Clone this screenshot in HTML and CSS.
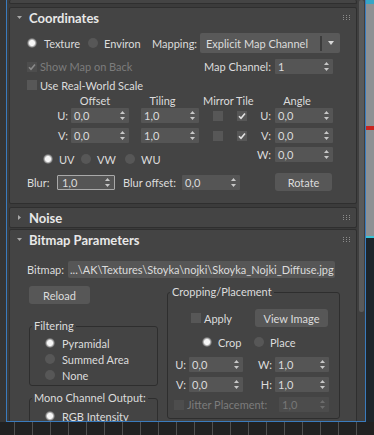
FILE: index.html
```html
<!DOCTYPE html>
<html lang="en">

<head>
    <meta charset="UTF-8">
    <meta name="viewport" content="width=device-width, initial-scale=1.0">
    <title>Bitmap Parameters</title>
    <link rel="stylesheet" href="styles.css">
</head>

<body>
    <div class="screen">
        <div class="workspace">
            <div class="side"></div>

            <div class="frame">
                <div class="rollouts">
                    <!-- bottom edge of the rollout above -->
                    <div class="rollout stub"></div>

                    <!-- Coordinates -->
                    <section class="rollout">
                        <div class="head">
                            <span class="tri down"></span>
                            <span class="title">Coordinates</span>
                            <svg class="grip" width="7" height="5" viewBox="0 0 7 5"><g fill="#8c8c8c"><rect x="0" y="0" width="1" height="1"/><rect x="3" y="0" width="1" height="1"/><rect x="6" y="0" width="1" height="1"/><rect x="0" y="2" width="1" height="1"/><rect x="3" y="2" width="1" height="1"/><rect x="6" y="2" width="1" height="1"/><rect x="0" y="4" width="1" height="1"/><rect x="3" y="4" width="1" height="1"/><rect x="6" y="4" width="1" height="1"/></g></svg>
                        </div>
                        <div class="body coords">
                            <div class="row row-map">
                                <label class="opt w-texture"><span class="radio on"></span>Texture</label>
                                <label class="opt w-environ"><span class="radio"></span>Environ</label>
                                <span class="w-mapping">Mapping:</span>
                                <div class="dropdown">
                                    <span class="dd-text">Explicit Map Channel</span>
                                    <span class="dd-btn"><svg width="6" height="4" viewBox="0 0 6 4"><path d="M0 0H6L3 4Z" fill="#d8d8d8"/></svg></span>
                                </div>
                            </div>
                            <div class="row row-back">
                                <label class="opt cb w-back disabled"><span class="check dis"><svg width="8" height="8" viewBox="0 0 8 8"><path d="M1 4.2L3 6.3L7 1.6" fill="none" stroke="#8a8a8a" stroke-width="1.6"/></svg></span>Show Map on Back</label>
                                <span class="w-mapch">Map Channel:</span>
                                <div class="spin"><span>1</span><i class="arr"></i></div>
                            </div>
                            <div class="row row-scale">
                                <label class="opt cb"><span class="check"></span>Use Real-World Scale</label>
                            </div>

                            <div class="uvw">
                                <div class="uvw-left">
                                    <div class="row hdr">
                                        <span class="c-lbl"></span>
                                        <span class="h-offset">Offset</span>
                                        <span class="h-tiling">Tiling</span>
                                        <span class="h-mirror">Mirror Tile</span>
                                    </div>
                                    <div class="row val">
                                        <span class="c-lbl">U:</span>
                                        <div class="spin"><span>0,0</span><i class="arr"></i></div>
                                        <div class="spin tiling"><span>1,0</span><i class="arr"></i></div>
                                        <span class="check mirror"></span>
                                        <span class="check tile"><svg width="8" height="8" viewBox="0 0 8 8"><path d="M1 4.2L3 6.3L7 1.6" fill="none" stroke="#e2e2e2" stroke-width="1.6"/></svg></span>
                                    </div>
                                    <div class="row val v">
                                        <span class="c-lbl">V:</span>
                                        <div class="spin"><span>0,0</span><i class="arr"></i></div>
                                        <div class="spin tiling"><span>1,0</span><i class="arr"></i></div>
                                        <span class="check mirror"></span>
                                        <span class="check tile"><svg width="8" height="8" viewBox="0 0 8 8"><path d="M1 4.2L3 6.3L7 1.6" fill="none" stroke="#e2e2e2" stroke-width="1.6"/></svg></span>
                                    </div>
                                    <div class="row axes">
                                        <label class="opt w-uv"><span class="radio on"></span>UV</label>
                                        <label class="opt w-vw"><span class="radio"></span>VW</label>
                                        <label class="opt"><span class="radio"></span>WU</label>
                                    </div>
                                    <div class="row blur">
                                        <span class="w-blur">Blur:</span>
                                        <div class="spin focus"><span>1,0</span><i class="arr"></i></div>
                                        <span class="w-bluroff">Blur offset:</span>
                                        <div class="spin"><span>0,0</span><i class="arr"></i></div>
                                    </div>
                                </div>

                                <div class="uvw-right">
                                    <div class="row hdr">
                                        <span class="a-lbl"></span>
                                        <span class="h-angle">Angle</span>
                                    </div>
                                    <div class="row val">
                                        <span class="a-lbl">U:</span>
                                        <div class="spin"><span>0,0</span><i class="arr"></i></div>
                                    </div>
                                    <div class="row val v">
                                        <span class="a-lbl">V:</span>
                                        <div class="spin"><span>0,0</span><i class="arr"></i></div>
                                    </div>
                                    <div class="row val w">
                                        <span class="a-lbl">W:</span>
                                        <div class="spin"><span>0,0</span><i class="arr"></i></div>
                                    </div>
                                    <button class="btn rotate">Rotate</button>
                                </div>
                            </div>
                        </div>
                    </section>

                    <!-- Noise -->
                    <section class="rollout closed">
                        <div class="head">
                            <span class="tri right"></span>
                            <span class="title">Noise</span>
                            <svg class="grip" width="7" height="5" viewBox="0 0 7 5"><g fill="#8c8c8c"><rect x="0" y="0" width="1" height="1"/><rect x="3" y="0" width="1" height="1"/><rect x="6" y="0" width="1" height="1"/><rect x="0" y="2" width="1" height="1"/><rect x="3" y="2" width="1" height="1"/><rect x="6" y="2" width="1" height="1"/><rect x="0" y="4" width="1" height="1"/><rect x="3" y="4" width="1" height="1"/><rect x="6" y="4" width="1" height="1"/></g></svg>
                        </div>
                    </section>

                    <!-- Bitmap Parameters -->
                    <section class="rollout">
                        <div class="head">
                            <span class="tri down"></span>
                            <span class="title">Bitmap Parameters</span>
                            <svg class="grip" width="7" height="5" viewBox="0 0 7 5"><g fill="#8c8c8c"><rect x="0" y="0" width="1" height="1"/><rect x="3" y="0" width="1" height="1"/><rect x="6" y="0" width="1" height="1"/><rect x="0" y="2" width="1" height="1"/><rect x="3" y="2" width="1" height="1"/><rect x="6" y="2" width="1" height="1"/><rect x="0" y="4" width="1" height="1"/><rect x="3" y="4" width="1" height="1"/><rect x="6" y="4" width="1" height="1"/></g></svg>
                        </div>
                        <div class="body bitmap">
                            <div class="row row-file">
                                <span class="w-bitmap">Bitmap:</span>
                                <div class="path">...\AK\Textures\Stoyka\nojki\Skoyka_Nojki_Diffuse.jpg</div>
                            </div>

                            <div class="bm-cols">
                                <div class="bm-left">
                                    <button class="btn reload">Reload</button>

                                    <fieldset class="group filtering">
                                        <legend>Filtering</legend>
                                        <div class="group-in">
                                            <label class="opt list"><span class="radio on"></span>Pyramidal</label>
                                            <label class="opt list"><span class="radio"></span>Summed Area</label>
                                            <label class="opt list"><span class="radio"></span>None</label>
                                        </div>
                                    </fieldset>

                                    <fieldset class="group mono">
                                        <legend>Mono Channel Output:</legend>
                                        <div class="group-in">
                                            <label class="opt list"><span class="radio on"></span>RGB Intensity</label>
                                        </div>
                                    </fieldset>
                                </div>

                                <fieldset class="group crop">
                                    <legend>Cropping/Placement</legend>
                                    <div class="row crop-apply">
                                        <label class="opt cb w-apply"><span class="check"></span>Apply</label>
                                        <button class="btn view-image">View Image</button>
                                    </div>
                                    <div class="row crop-mode">
                                        <label class="opt w-crop"><span class="radio on"></span>Crop</label>
                                        <label class="opt"><span class="radio"></span>Place</label>
                                    </div>
                                    <div class="row crop-val">
                                        <span class="p-lbl">U:</span>
                                        <div class="spin small"><span>0,0</span><i class="arr"></i></div>
                                        <span class="p-lbl2">W:</span>
                                        <div class="spin small"><span>1,0</span><i class="arr"></i></div>
                                    </div>
                                    <div class="row crop-val">
                                        <span class="p-lbl">V:</span>
                                        <div class="spin small"><span>0,0</span><i class="arr"></i></div>
                                        <span class="p-lbl2">H:</span>
                                        <div class="spin small"><span>1,0</span><i class="arr"></i></div>
                                    </div>
                                    <div class="row crop-jitter disabled">
                                        <label class="opt cb"><span class="check dis"></span>Jitter Placement:</label>
                                        <div class="spin jitter dis"><span>1,0</span><i class="arr"></i></div>
                                    </div>
                                </fieldset>
                            </div>
                        </div>
                    </section>
                </div>

                <div class="scrollbar">
                    <div class="thumb"></div>
                </div>
            </div>

            <!-- edge of the viewport -->
            <div class="viewport"></div>
        </div>

        <!-- time slider ticks -->
        <div class="timeline"></div>
    </div>
</body>

</html>
```

FILE: styles.css
```css
* {
    box-sizing: border-box;
}

body {
    margin: 0;
    background: #2a2a2a;
    font-family: Lato, 'Liberation Sans', sans-serif;
    font-size: 11px;
    color: #dcdcdc;
    white-space: nowrap;
}

.screen {
    width: 374px;
    height: 435px;
    overflow: hidden;
    display: flex;
    flex-direction: column;
}

.workspace {
    display: flex;
    height: 422px;
    flex: none;
}

.side {
    width: 6px;
    flex: none;
    background: #353535;
}

.frame {
    width: 360px;
    flex: none;
    display: flex;
    background: #3b3b3b;
    border: 1px solid #3a7bbd;
    border-top: none;
    overflow: hidden;
}

.viewport {
    width: 8px;
    flex: none;
    background: linear-gradient(#37a6c6 0 4px, #8e9194 4px 126px, #c8241f 126px 130px,
            #8e9194 130px 236px, #3ac3d8 236px 238px, #1d252b 238px);
}

.timeline {
    height: 13px;
    flex: none;
    background-color: #212121;
    background-image: linear-gradient(90deg, #505050 1px, transparent 1px);
    background-size: 18px 100%;
    background-position: 14px 0;
}

/* rollouts column */
.rollouts {
    width: 350px;
    flex: none;
    padding-left: 2px;
    overflow: hidden;
}

.scrollbar {
    width: 8px;
    flex: none;
    padding: 0 1px 0 2px;
    background: #3f3f3f;
}

.thumb {
    height: 312px;
    background: #5a5a5a;
    border-radius: 2px;
}

.rollout {
    background: #444;
    border: 1px solid #2f2f2f;
    border-radius: 2px;
    margin-bottom: 3px;
}

.stub {
    height: 4px;
    border-top: none;
}

.closed {
    margin-bottom: 1px;
}

.head {
    height: 19px;
    display: flex;
    align-items: center;
    padding: 0 6px 0 7px;
    font-weight: 700;
    font-size: 13px;
    color: #e8e8e8;
}

.tri {
    width: 5px;
    height: 5px;
    margin-right: 7px;
    background: #a8a8a8;
    flex: none;
}

.tri.down {
    height: 3px;
    clip-path: polygon(0 0, 100% 0, 50% 100%);
}

.tri.right {
    width: 3px;
    margin: 0 8px 0 1px;
    clip-path: polygon(0 0, 100% 50%, 0 100%);
}

.grip {
    margin-left: auto;
}

.body {
    padding-left: 17px;
}

.row {
    display: flex;
    align-items: center;
    flex: none;
}

.opt {
    display: flex;
    align-items: center;
    gap: 6px;
    flex: none;
}

.opt.cb {
    gap: 3px;
}

.disabled {
    color: #7c7c7c;
}

/* controls */
.radio {
    width: 10px;
    height: 10px;
    border-radius: 50%;
    background: #575757;
    flex: none;
}

.radio.on {
    background: radial-gradient(circle, #f6f6f6 0 2.6px, #bcbcbc 3.4px, #6a6a6a 4.6px, #5a5a5a 5px);
}

.check {
    width: 10px;
    height: 10px;
    background: #575757;
    flex: none;
    display: flex;
    align-items: center;
    justify-content: center;
}

.check.dis {
    background: #4d4d4d;
}

.spin {
    width: 58px;
    height: 15px;
    flex: none;
    display: flex;
    align-items: center;
    justify-content: space-between;
    padding: 0 4px 0 3px;
    background: #555;
    border-radius: 1px;
}

.spin.focus {
    border: 1px solid #a9a9a9;
    padding-left: 4px;
}

.spin.dis {
    background: #4c4c4c;
    color: #777;
}

.arr {
    width: 5px;
    height: 9px;
    flex: none;
    display: flex;
    flex-direction: column;
    justify-content: space-between;
}

.arr::before,
.arr::after {
    content: '';
    height: 3px;
    background: #c8c8c8;
}

.arr::before {
    clip-path: polygon(50% 0, 100% 100%, 0 100%);
}

.arr::after {
    clip-path: polygon(0 0, 100% 0, 50% 100%);
}

.spin.dis .arr::before,
.spin.dis .arr::after {
    background: #6c6c6c;
}

.btn {
    height: 18px;
    padding: 0;
    border: none;
    border-radius: 3px;
    background: #575757;
    color: #dcdcdc;
    font: inherit;
    flex: none;
}

.dropdown {
    width: 140px;
    height: 20px;
    flex: none;
    display: flex;
    align-items: center;
    background: #595959;
    border-radius: 2px;
}

.dd-text {
    padding-left: 6px;
    width: 120px;
    flex: none;
}

.dd-btn {
    height: 15px;
    flex: 1;
    display: flex;
    align-items: center;
    justify-content: center;
    border-left: 2px solid #3c3c3c;
}

/* Coordinates */
.coords {
    padding-bottom: 12px;
}

.row-map {
    margin-top: 6px;
    height: 20px;
}

.w-texture {
    width: 61px;
    gap: 7px;
}

.w-environ {
    width: 64px;
}

.w-mapping {
    width: 48px;
    flex: none;
}

.row-back {
    margin-top: 5px;
    height: 17px;
}

.w-back {
    width: 177px;
}

.w-mapch {
    width: 71px;
    flex: none;
}

.row-scale {
    margin-top: 2px;
    height: 16px;
}

.uvw {
    display: flex;
}

.uvw-left {
    width: 228px;
    flex: none;
}

.row.hdr {
    height: 15px;
}

.row.val {
    height: 15px;
}

.row.val.v {
    margin-top: 5px;
}

.row.val.w {
    margin-top: 4px;
}

.c-lbl {
    width: 44px;
    padding-right: 3px;
    text-align: right;
    flex: none;
}

.h-offset {
    width: 58px;
    flex: none;
    padding-right: 10px;
    text-align: center;
}

.h-tiling {
    width: 58px;
    flex: none;
    margin-left: 12px;
    padding-right: 15px;
    text-align: center;
}

.h-mirror {
    padding-left: 4px;
}

.spin.tiling {
    margin-left: 12px;
}

.check.mirror {
    margin-left: 14px;
}

.check.tile {
    margin-left: 14px;
}

.axes {
    margin-top: 10px;
    height: 12px;
    padding-left: 16px;
}

.w-uv {
    width: 38px;
}

.w-vw {
    width: 44px;
}

.blur {
    margin-top: 10px;
    height: 15px;
}

.w-blur {
    width: 30px;
    flex: none;
}

.w-bluroff {
    width: 59px;
    flex: none;
    margin-left: 8px;
}

.a-lbl {
    width: 20px;
    padding-right: 4px;
    text-align: right;
    flex: none;
}

.h-angle {
    width: 58px;
    flex: none;
    padding-right: 14px;
    text-align: center;
}

.rotate {
    width: 57px;
    margin: 11px 0 0 20px;
    display: block;
}

/* Bitmap Parameters */
.row-file {
    margin-top: 12px;
    height: 17px;
}

.w-bitmap {
    width: 41px;
    flex: none;
}

.path {
    width: 267px;
    flex: none;
    height: 17px;
    line-height: 17px;
    padding-left: 2px;
    background: #565656;
    border-radius: 2px;
    overflow: hidden;
}

.bm-cols {
    display: flex;
    align-items: flex-start;
    margin-top: 7px;
}

.bm-left {
    width: 129px;
    margin-left: 2px;
    flex: none;
}

.reload {
    width: 61px;
    margin-top: 1px;
    display: block;
}

.group {
    margin: 0;
    padding: 0;
    border: 1px solid #2e2e2e;
    border-radius: 3px;
    min-width: 0;
}

.group legend {
    margin-left: 2px;
    padding: 0 2px;
    line-height: 14px;
}

.group-in {
    padding: 2px 0 2px 15px;
}

.opt.list {
    height: 16px;
    gap: 7px;
}

.filtering {
    margin-top: 15px;
}

.mono {
    margin-top: 5px;
}

.mono .group-in {
    padding-top: 3px;
}

.crop {
    width: 173px;
    margin-left: 9px;
    flex: none;
    padding-bottom: 6px;
}

.crop-apply {
    margin-top: 10px;
    height: 18px;
    padding-left: 23px;
}

.w-apply {
    width: 64px;
}

.view-image {
    width: 73px;
}

.crop-mode {
    margin-top: 7px;
    height: 16px;
    padding-left: 34px;
}

.w-crop {
    width: 52px;
}

.crop-val {
    margin-top: 5px;
    height: 15px;
}

.crop-mode + .crop-val {
    margin-top: 7px;
}

.p-lbl {
    width: 21px;
    padding-right: 3px;
    text-align: right;
    flex: none;
}

.p-lbl2 {
    width: 32px;
    padding-right: 3px;
    text-align: right;
    flex: none;
}

.spin.small {
    width: 54px;
}

.crop-jitter {
    margin-top: 5px;
    height: 15px;
    padding-left: 6px;
}

.spin.jitter {
    width: 50px;
    margin-left: auto;
    margin-right: 10px;
}
```
